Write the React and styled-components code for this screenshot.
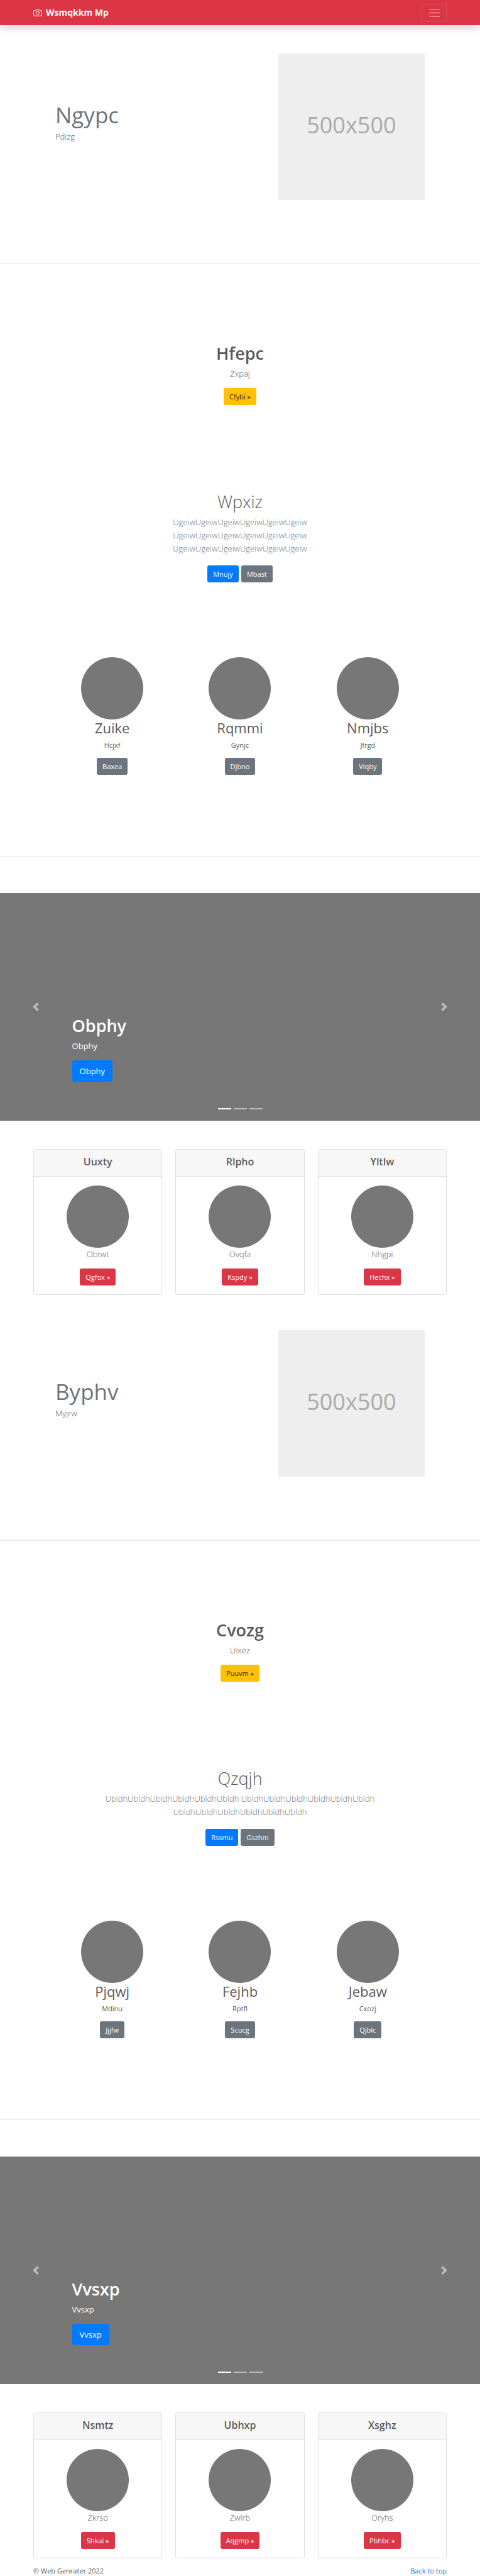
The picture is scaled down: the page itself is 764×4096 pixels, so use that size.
import React from "react";
import styled, { createGlobalStyle, css } from "styled-components";

const GlobalStyle = createGlobalStyle`
  *, *::before, *::after { box-sizing: border-box; }
  body {
    margin: 0;
    background: #fff;
    color: #5a5a5a;
    font-family: "Open Sans", "Noto Sans", sans-serif;
    font-size: 11px;
    line-height: 17px;
  }
  h1, h2, h3, p { margin: 0; font-weight: 400; }
  a { text-decoration: none; }
`;

const gutter = "53px";

const Navbar = styled.header`
  position: relative;
  display: flex;
  align-items: center;
  justify-content: space-between;
  height: 40px;
  padding: 0 ${gutter};
  background: #dc3545;
  box-shadow: 0 6px 11px rgba(0, 0, 0, 0.15);
`;

const Brand = styled.a`
  display: flex;
  align-items: center;
  gap: 6px;
  color: #fff;
  font-size: 14px;
  line-height: 20px;
  font-weight: 700;
`;

const Toggler = styled.button`
  display: flex;
  align-items: center;
  justify-content: center;
  width: 40px;
  height: 28px;
  padding: 0;
  border: 1px solid rgba(255, 255, 255, 0.1);
  border-radius: 3px;
  background: transparent;
  color: rgba(255, 255, 255, 0.5);
`;

const Hero = styled.section`
  display: grid;
  grid-template-columns: 3fr 2fr;
  column-gap: 5px;
  align-items: center;
  padding: ${(p) => (p.$first ? "45px" : "56px")} 88px 101px;
`;

const HeroText = styled.div`
  padding-bottom: 12px;
`;

const HeroTitle = styled.h1`
  margin-bottom: 5px;
  color: #6c757d;
  font-size: 35px;
  line-height: 38px;
`;

const Placeholder = styled.div`
  display: flex;
  align-items: center;
  justify-content: center;
  aspect-ratio: 1;
  padding-bottom: 6px;
  background: #eee;
  color: #aaa;
  font-size: 36px;
  line-height: 52px;
`;

const Lead = styled.p`
  font-size: 13px;
  line-height: 21px;
  font-weight: 300;
  color: ${(p) => (p.$muted ? "#6c757d" : "inherit")};
`;

const Line = styled.span`
  display: block;
`;

const Divider = styled.hr`
  height: 1px;
  margin: 0;
  border: 0;
  background: rgba(0, 0, 0, 0.1);
`;

const Headline = styled.section`
  padding: 125px 88px 0;
  text-align: center;
`;

const Intro = styled.section`
  max-width: 438px;
  margin: 137px auto 0;
  text-align: center;
`;

const SectionTitle = styled.h2`
  margin-bottom: 5px;
  font-size: 27px;
  line-height: 34px;
  font-weight: ${(p) => (p.$light ? 300 : 600)};
`;

const Actions = styled.div`
  display: flex;
  justify-content: center;
  gap: 4px;
  padding-top: ${(p) => (p.$wide ? "16px" : "12px")};
`;

const tones = {
  warning: css`background: #ffc107; color: #212529;`,
  primary: css`background: #007bff; color: #fff;`,
  secondary: css`background: #6c757d; color: #fff;`,
  danger: css`background: #dc3545; color: #fff;`,
};

const Button = styled.button`
  padding: 5px 9px;
  border: 0;
  border-radius: 3px;
  font: inherit;
  ${(p) => tones[p.$tone]}
  ${(p) =>
    p.$large &&
    css`
      padding: 7px 12px;
      border-radius: 4px;
      font-size: 13px;
      line-height: 20px;
    `}
`;

const People = styled.section`
  display: grid;
  grid-template-columns: repeat(3, 1fr);
  padding: 119px 77px 129px;
  text-align: center;
`;

const Avatar = styled.div`
  width: 99px;
  height: 99px;
  margin: 0 auto;
  border-radius: 50%;
  background: #777;
`;

const PersonName = styled.h2`
  margin-bottom: 5px;
  font-size: 22px;
  line-height: 27px;
`;

const Carousel = styled.section`
  position: relative;
  height: 362px;
  margin: 58px 0 45px;
  background: #777;
  color: #fff;
`;

const Caption = styled.div`
  position: absolute;
  left: 15%;
  bottom: 62px;
`;

const CaptionTitle = styled.h1`
  margin-bottom: 5px;
  font-size: 27px;
  line-height: 34px;
  font-weight: 600;
`;

const CaptionText = styled.p`
  margin-bottom: 12px;
  font-size: 13px;
  line-height: 21px;
`;

const Arrow = styled.button`
  position: absolute;
  top: 0;
  bottom: 0;
  ${(p) => p.$side}: 0;
  display: flex;
  align-items: center;
  justify-content: center;
  width: 15%;
  padding: 0;
  border: 0;
  background: transparent;
  color: #fff;
  opacity: 0.5;
`;

const Indicators = styled.div`
  position: absolute;
  left: 0;
  right: 0;
  bottom: 18px;
  display: flex;
  justify-content: center;
  gap: 4px;
`;

const Indicator = styled.button`
  width: 21px;
  height: 2px;
  padding: 0;
  border: 0;
  background: #fff;
  opacity: ${(p) => (p.$active ? 1 : 0.5)};
`;

const Cards = styled.section`
  display: grid;
  grid-template-columns: repeat(3, 1fr);
  gap: 21px;
  padding: 0 ${gutter};
  text-align: center;
`;

const Card = styled.article`
  border: 1px solid #dfdfdf;
  border-radius: 3px;
  overflow: hidden;
`;

const CardHeader = styled.h3`
  padding: 9px 14px 12px;
  border-bottom: 1px solid #dfdfdf;
  background: #f7f7f7;
  font-size: 16px;
  line-height: 21px;
  font-weight: 600;
`;

const CardBody = styled.div`
  padding: 14px;
`;

const Footer = styled.footer`
  display: flex;
  justify-content: space-between;
  padding: 11px ${gutter} 0;
`;

const FooterLink = styled.a`
  color: #007bff;
`;

const CameraIcon = () => (
  <svg width="14" height="14" viewBox="0 0 24 24" fill="none" stroke="currentColor" strokeWidth="1.7" aria-hidden="true">
    <path d="M23 19a2 2 0 0 1-2 2H3a2 2 0 0 1-2-2V8a2 2 0 0 1 2-2h4l2-3h6l2 3h4a2 2 0 0 1 2 2z" />
    <circle cx="12" cy="13" r="4.2" />
  </svg>
);

const MenuIcon = () => (
  <svg width="21" height="21" viewBox="0 0 30 30" stroke="currentColor" strokeWidth="2" aria-hidden="true">
    <path d="M3 7h24M3 15h24M3 23h24" />
  </svg>
);

const Chevron = ({ next }) => (
  <svg width="14" height="14" viewBox="0 0 8 8" fill="currentColor" aria-hidden="true">
    {next ? (
      <path d="M2.75 0l-1.5 1.5L3.75 4l-2.5 2.5L2.75 8l4-4-4-4z" />
    ) : (
      <path d="M5.25 0l-4 4 4 4 1.5-1.5L4.25 4l2.5-2.5L5.25 0z" />
    )}
  </svg>
);

const ugeiw = "Ugeiw".repeat(6);
const ubldh = "Ubldh".repeat(6);

const pages = [
  {
    hero: { title: "Ngypc", text: "Pdizg" },
    headline: { title: "Hfepc", text: "Zxpaj", action: "Cfybi »" },
    intro: { title: "Wpxiz", lines: [ugeiw, ugeiw, ugeiw], primary: "Mnujy", secondary: "Mbast" },
    people: [
      ["Zuike", "Hcjxf", "Baxea"],
      ["Rqmmi", "Gynjc", "Djbno"],
      ["Nmjbs", "Jfrgd", "Vlqby"],
    ],
    slide: "Obphy",
    cards: [
      ["Uuxty", "Obtwt", "Qgfox »"],
      ["Rlpho", "Ovqfa", "Kspdy »"],
      ["Yltlw", "Nhgpi", "Hechx »"],
    ],
  },
  {
    hero: { title: "Byphv", text: "Myjrw" },
    headline: { title: "Cvozg", text: "Uixez", action: "Puuvm »" },
    intro: { title: "Qzqjh", lines: [`${ubldh} ${ubldh}`, ubldh], primary: "Rssmu", secondary: "Gszhm" },
    people: [
      ["Pjqwj", "Mdinu", "Jjjfw"],
      ["Fejhb", "Rptfl", "Scucg"],
      ["Jebaw", "Cxozj", "Qjblc"],
    ],
    slide: "Vvsxp",
    cards: [
      ["Nsmtz", "Zkrso", "Shkai »"],
      ["Ubhxp", "Zwlrb", "Aqgmp »"],
      ["Xsghz", "Oryhs", "Pbhbc »"],
    ],
  },
];

function PageBlock({ page, first }) {
  const { hero, headline, intro, people, slide, cards } = page;
  return (
    <>
      <Hero $first={first}>
        <HeroText>
          <HeroTitle>{hero.title}</HeroTitle>
          <Lead>{hero.text}</Lead>
        </HeroText>
        <Placeholder>500x500</Placeholder>
      </Hero>
      <Divider />
      <Headline>
        <SectionTitle>{headline.title}</SectionTitle>
        <Lead>{headline.text}</Lead>
        <Actions>
          <Button $tone="warning">{headline.action}</Button>
        </Actions>
      </Headline>
      <Intro>
        <SectionTitle $light>{intro.title}</SectionTitle>
        <Lead $muted>
          {intro.lines.map((line, i) => (
            <Line key={i}>{line}</Line>
          ))}
        </Lead>
        <Actions $wide>
          <Button $tone="primary">{intro.primary}</Button>
          <Button $tone="secondary">{intro.secondary}</Button>
        </Actions>
      </Intro>
      <People>
        {people.map(([name, text, action]) => (
          <div key={name}>
            <Avatar />
            <PersonName>{name}</PersonName>
            <p>{text}</p>
            <Actions>
              <Button $tone="secondary">{action}</Button>
            </Actions>
          </div>
        ))}
      </People>
      <Divider />
      <Carousel>
        <Arrow $side="left" aria-label="Previous"><Chevron /></Arrow>
        <Arrow $side="right" aria-label="Next"><Chevron next /></Arrow>
        <Caption>
          <CaptionTitle>{slide}</CaptionTitle>
          <CaptionText>{slide}</CaptionText>
          <Button $tone="primary" $large>{slide}</Button>
        </Caption>
        <Indicators>
          {[0, 1, 2].map((i) => (
            <Indicator key={i} $active={i === 0} aria-label={`Slide ${i + 1}`} />
          ))}
        </Indicators>
      </Carousel>
      <Cards>
        {cards.map(([title, text, action]) => (
          <Card key={title}>
            <CardHeader>{title}</CardHeader>
            <CardBody>
              <Avatar />
              <Lead>{text}</Lead>
              <Actions>
                <Button $tone="danger">{action}</Button>
              </Actions>
            </CardBody>
          </Card>
        ))}
      </Cards>
    </>
  );
}

export default function App() {
  return (
    <>
      <GlobalStyle />
      <Navbar id="top">
        <Brand href="#top">
          <CameraIcon />
          Wsmqkkm Mp
        </Brand>
        <Toggler aria-label="Toggle navigation"><MenuIcon /></Toggler>
      </Navbar>
      <main>
        {pages.map((page, i) => (
          <PageBlock key={page.slide} page={page} first={i === 0} />
        ))}
      </main>
      <Footer>
        <span>© Web Genrater 2022</span>
        <FooterLink href="#top">Back to top</FooterLink>
      </Footer>
    </>
  );
}
